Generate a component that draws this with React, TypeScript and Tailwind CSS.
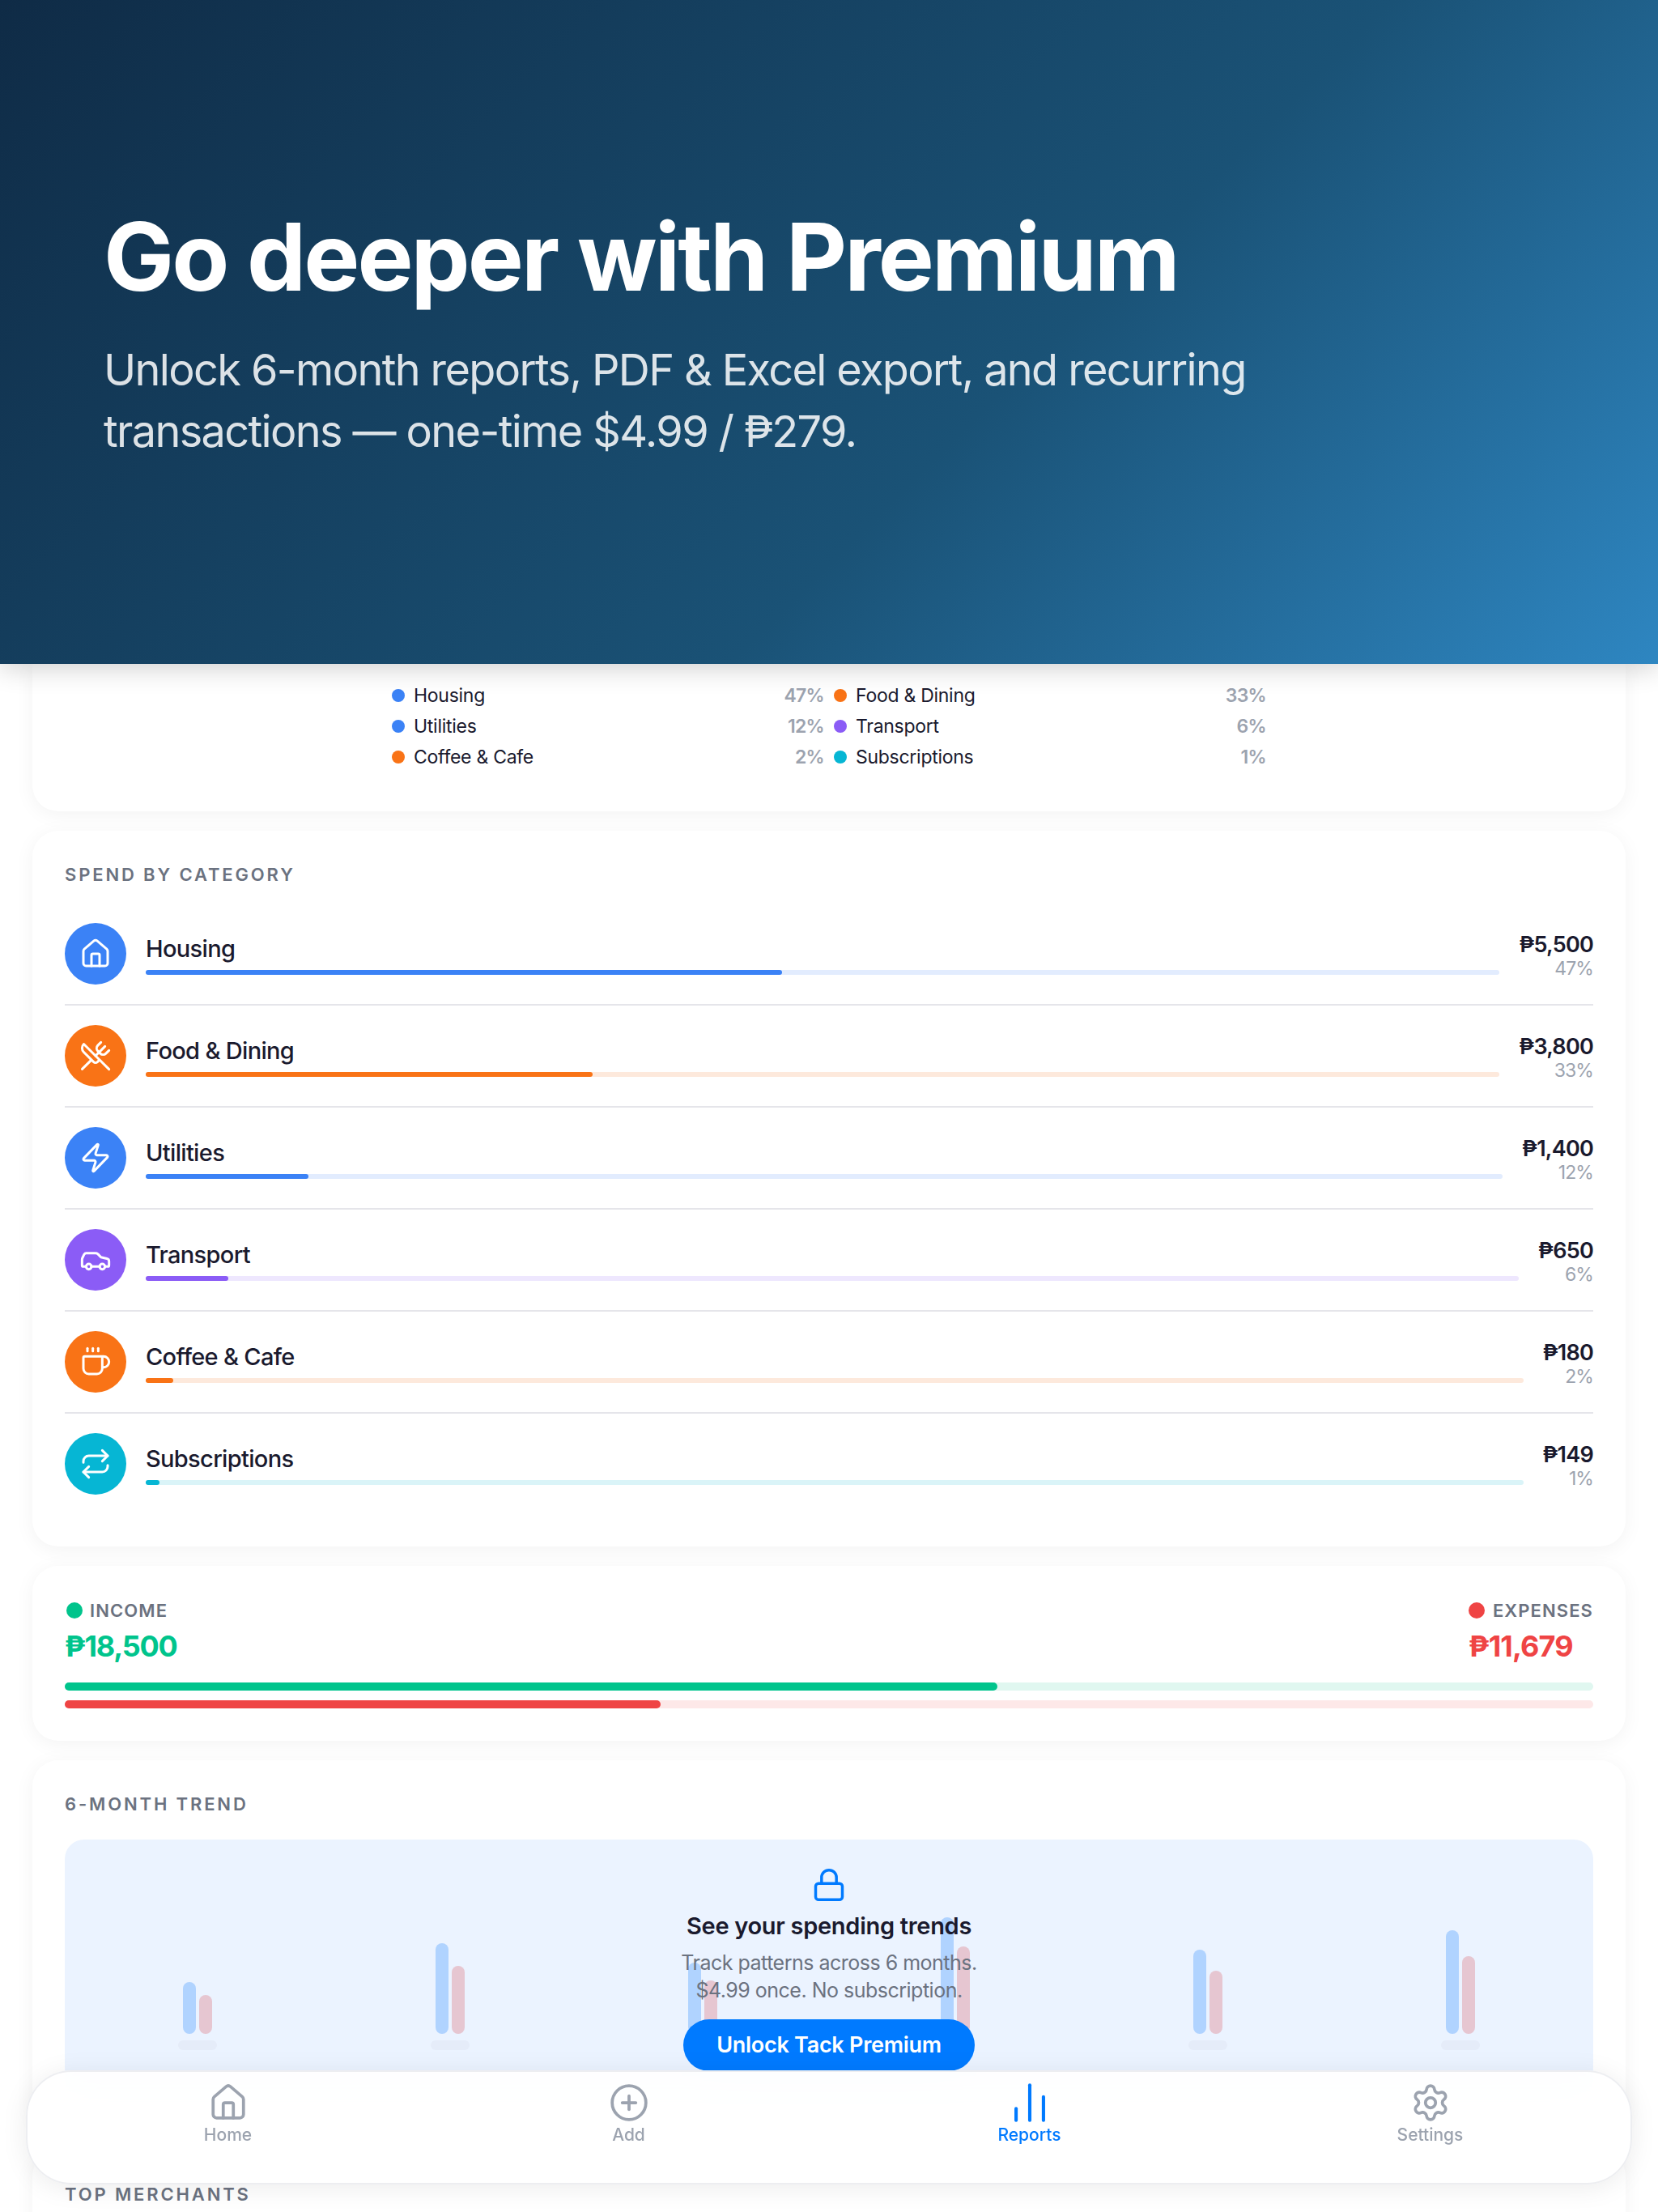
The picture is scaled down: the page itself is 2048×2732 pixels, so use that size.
import { BarChart2, Car, Coffee, House, Lock, PlusCircle, Repeat, Settings, UtensilsCrossed, Zap } from 'lucide-react';

const legend = [
    { name: 'Housing', pct: '47%', dot: 'bg-[#3b82f6]' },
    { name: 'Food & Dining', pct: '33%', dot: 'bg-[#f97316]' },
    { name: 'Utilities', pct: '12%', dot: 'bg-[#3b82f6]' },
    { name: 'Transport', pct: '6%', dot: 'bg-[#8b5cf6]' },
    { name: 'Coffee & Cafe', pct: '2%', dot: 'bg-[#f97316]' },
    { name: 'Subscriptions', pct: '1%', dot: 'bg-[#06b6d4]' },
];

const categories = [
    { name: 'Housing', amount: '₱5,500', pct: 47, Icon: House, solid: 'bg-[#3b82f6]', track: 'bg-[#e2ecfe]' },
    { name: 'Food & Dining', amount: '₱3,800', pct: 33, Icon: UtensilsCrossed, solid: 'bg-[#f97316]', track: 'bg-[#fde9dc]' },
    { name: 'Utilities', amount: '₱1,400', pct: 12, Icon: Zap, solid: 'bg-[#3b82f6]', track: 'bg-[#e2ecfe]' },
    { name: 'Transport', amount: '₱650', pct: 6, Icon: Car, solid: 'bg-[#8b5cf6]', track: 'bg-[#eee7fe]' },
    { name: 'Coffee & Cafe', amount: '₱180', pct: 2, Icon: Coffee, solid: 'bg-[#f97316]', track: 'bg-[#fde9dc]' },
    { name: 'Subscriptions', amount: '₱149', pct: 1, Icon: Repeat, solid: 'bg-[#06b6d4]', track: 'bg-[#daf4f8]' },
];

const trend = [
    { income: 64, expense: 48 },
    { income: 112, expense: 84 },
    { income: 88, expense: 66 },
    { income: 144, expense: 108 },
    { income: 104, expense: 78 },
    { income: 128, expense: 96 },
];

const cardClass = 'bg-white rounded-[32px] shadow-[0_4px_24px_rgba(0,0,0,0.05)]';
const sectionTitleClass = 'text-[22px] leading-[28px] font-semibold tracking-[0.13em] text-[#6b7280]';

export default function App() {
    return (
        <div className="relative h-[2732px] overflow-hidden bg-white font-['Inter',sans-serif] text-[#1a1a2e]">
            {/* Hero */}
            <div className="relative z-10 flex h-[820px] flex-col justify-center bg-[linear-gradient(135deg,#0f2b46_0%,#1a5276_60%,#2e86c1_100%)] px-[128px] pt-[4px] shadow-[0_4px_32px_rgba(0,0,0,0.2)]">
                <h1 className="text-[116px] leading-[128px] font-bold tracking-[-0.025em] text-white">Go deeper with Premium</h1>
                <p className="mt-[38px] w-[1560px] text-[54px] leading-[76px] tracking-[-0.03em] text-white/85">
                    Unlock 6-month reports, PDF &amp; Excel export, and recurring transactions — one-time $4.99 / ₱279.
                </p>
            </div>

            <div className="flex flex-col gap-[24px] px-[40px]">
                {/* Legend, top of the card sits behind the hero */}
                <div className="rounded-b-[32px] bg-white pt-[20px] pb-[48px] shadow-[0_4px_24px_rgba(0,0,0,0.05)]">
                    <div className="mx-auto grid w-[1080px] grid-cols-2 gap-x-[12px]">
                        {legend.map((item) => (
                            <div key={item.name} className="flex h-[38px] items-center text-[23px] tracking-[-0.012em]">
                                <span className={`mr-[11px] h-[16px] w-[16px] rounded-full ${item.dot}`} />
                                <span className="flex-1">{item.name}</span>
                                <span className="font-semibold tracking-[-0.03em] text-[#9ca3af]">{item.pct}</span>
                            </div>
                        ))}
                    </div>
                </div>

                {/* Spend by category */}
                <div className={`${cardClass} p-[40px]`}>
                    <div className={`${sectionTitleClass} mb-[22px]`}>SPEND BY CATEGORY</div>
                    {categories.map((cat, idx) => (
                        <div
                            key={cat.name}
                            className={`flex items-center gap-[24px] py-[24px] ${idx < categories.length - 1 ? 'border-b-2 border-[#e5e5ea]' : ''}`}
                        >
                            <div className={`flex h-[76px] w-[76px] shrink-0 items-center justify-center rounded-full text-white ${cat.solid}`}>
                                <cat.Icon size={40} strokeWidth={1.8} />
                            </div>
                            <div className="min-w-0 flex-1">
                                <div className="text-[29px] leading-[40px] font-medium tracking-[-0.023em]">{cat.name}</div>
                                <div className={`mt-[6px] h-[6px] rounded-full ${cat.track}`}>
                                    <div className={`h-full rounded-full ${cat.solid}`} style={{ width: `${cat.pct}%` }} />
                                </div>
                            </div>
                            <div className="text-right">
                                <div className="text-[27px] leading-[36px] font-semibold tracking-[-0.028em]">{cat.amount}</div>
                                <div className="text-[23px] leading-[23px] tracking-[-0.04em] text-[#9ca3af]">{cat.pct}%</div>
                            </div>
                        </div>
                    ))}
                </div>

                {/* Income vs expenses */}
                <div className={`${cardClass} p-[40px]`}>
                    <div className="flex justify-between">
                        <div>
                            <div className="flex h-[30px] items-center gap-[9px] text-[22px] font-semibold tracking-[0.05em] text-[#6b7280]">
                                <span className="ml-[2px] h-[20px] w-[20px] rounded-full bg-[#00c48c]" />
                                INCOME
                            </div>
                            <div className="mt-[5px] text-[36px] leading-[48px] font-bold tracking-[-0.035em] text-[#00c48c]">₱18,500</div>
                        </div>
                        <div>
                            <div className="flex h-[30px] items-center gap-[10px] text-[22px] font-semibold tracking-[0.05em] text-[#6b7280]">
                                <span className="h-[20px] w-[20px] rounded-full bg-[#ef4444]" />
                                EXPENSES
                            </div>
                            <div className="mt-[5px] text-[36px] leading-[48px] font-bold tracking-[-0.025em] text-[#ef4444]">₱11,679</div>
                        </div>
                    </div>
                    <div className="mt-[21px] h-[10px] rounded-[5px] bg-[#e0f7f0]">
                        <div className="h-full w-[61%] rounded-[5px] bg-[#00c48c]" />
                    </div>
                    <div className="mt-[12px] h-[10px] rounded-[5px] bg-[#fde8e8]">
                        <div className="h-full w-[39%] rounded-[5px] bg-[#ef4444]" />
                    </div>
                </div>

                {/* 6-month trend, locked */}
                <div className={`${cardClass} p-[40px]`}>
                    <div className={`${sectionTitleClass} mb-[30px]`}>6-MONTH TREND</div>
                    <div className="relative flex h-[320px] items-end overflow-hidden rounded-[24px] bg-[#ebf3ff] px-[8px] pb-[60px]">
                        <div className="grid w-full grid-cols-6 items-end">
                            {trend.map((month, idx) => (
                                <div key={idx} className="flex flex-col items-center">
                                    <div className="flex items-end gap-[4px]">
                                        <div className="w-[16px] rounded-full bg-[#b0d3ff]" style={{ height: month.income }} />
                                        <div className="w-[16px] rounded-full bg-[#e6c6d1]" style={{ height: month.expense }} />
                                    </div>
                                    <div className="mt-[8px] h-[12px] w-[48px] rounded-[6px] bg-[#e5ecf9]" />
                                </div>
                            ))}
                        </div>
                        <div className="absolute inset-0 flex flex-col items-center justify-center">
                            <Lock size={44} strokeWidth={1.9} className="text-[#007aff]" />
                            <div className="mt-[9px] text-[29px] leading-[40px] font-semibold tracking-[-0.01em]">See your spending trends</div>
                            <div className="mt-[8px] text-center text-[25px] leading-[34px] tracking-[-0.02em] text-[#6b7280]">
                                Track patterns across 6 months.
                                <br />
                                $4.99 once. No subscription.
                            </div>
                            <button className="mt-[19px] h-[64px] w-[360px] rounded-full bg-[#007aff] text-[27px] font-semibold tracking-[-0.01em] text-white">
                                Unlock Tack Premium
                            </button>
                        </div>
                    </div>
                </div>

                {/* Top merchants, runs off the page */}
                <div className={`${cardClass} h-[200px] p-[40px]`}>
                    <div className={sectionTitleClass}>TOP MERCHANTS</div>
                </div>
            </div>

            {/* Bottom nav */}
            <div className="absolute right-[32px] bottom-[34px] left-[32px] z-20 grid h-[141px] grid-cols-4 rounded-[56px] border-2 border-[#e5e7eb]/70 bg-white/90 pt-[13px] shadow-[0_4px_32px_rgba(0,0,0,0.08)] backdrop-blur-xl">
                <NavItem label="Home">
                    <House size={50} strokeWidth={1.8} />
                </NavItem>
                <NavItem label="Add">
                    <PlusCircle size={50} strokeWidth={1.8} />
                </NavItem>
                <NavItem label="Reports" active>
                    <BarChart2 size={58} strokeWidth={1.7} />
                </NavItem>
                <NavItem label="Settings">
                    <Settings size={50} strokeWidth={1.8} />
                </NavItem>
            </div>
        </div>
    );
}

function NavItem({ label, active, children }: { label: string; active?: boolean; children: React.ReactNode }) {
    return (
        <div className={`flex flex-col items-center ${active ? 'text-[#007aff]' : 'text-[#9ca3af]'}`}>
            <div className="flex h-[50px] items-center justify-center">{children}</div>
            <div className="mt-[1px] text-[21px] leading-[28px] font-medium">{label}</div>
        </div>
    );
}
